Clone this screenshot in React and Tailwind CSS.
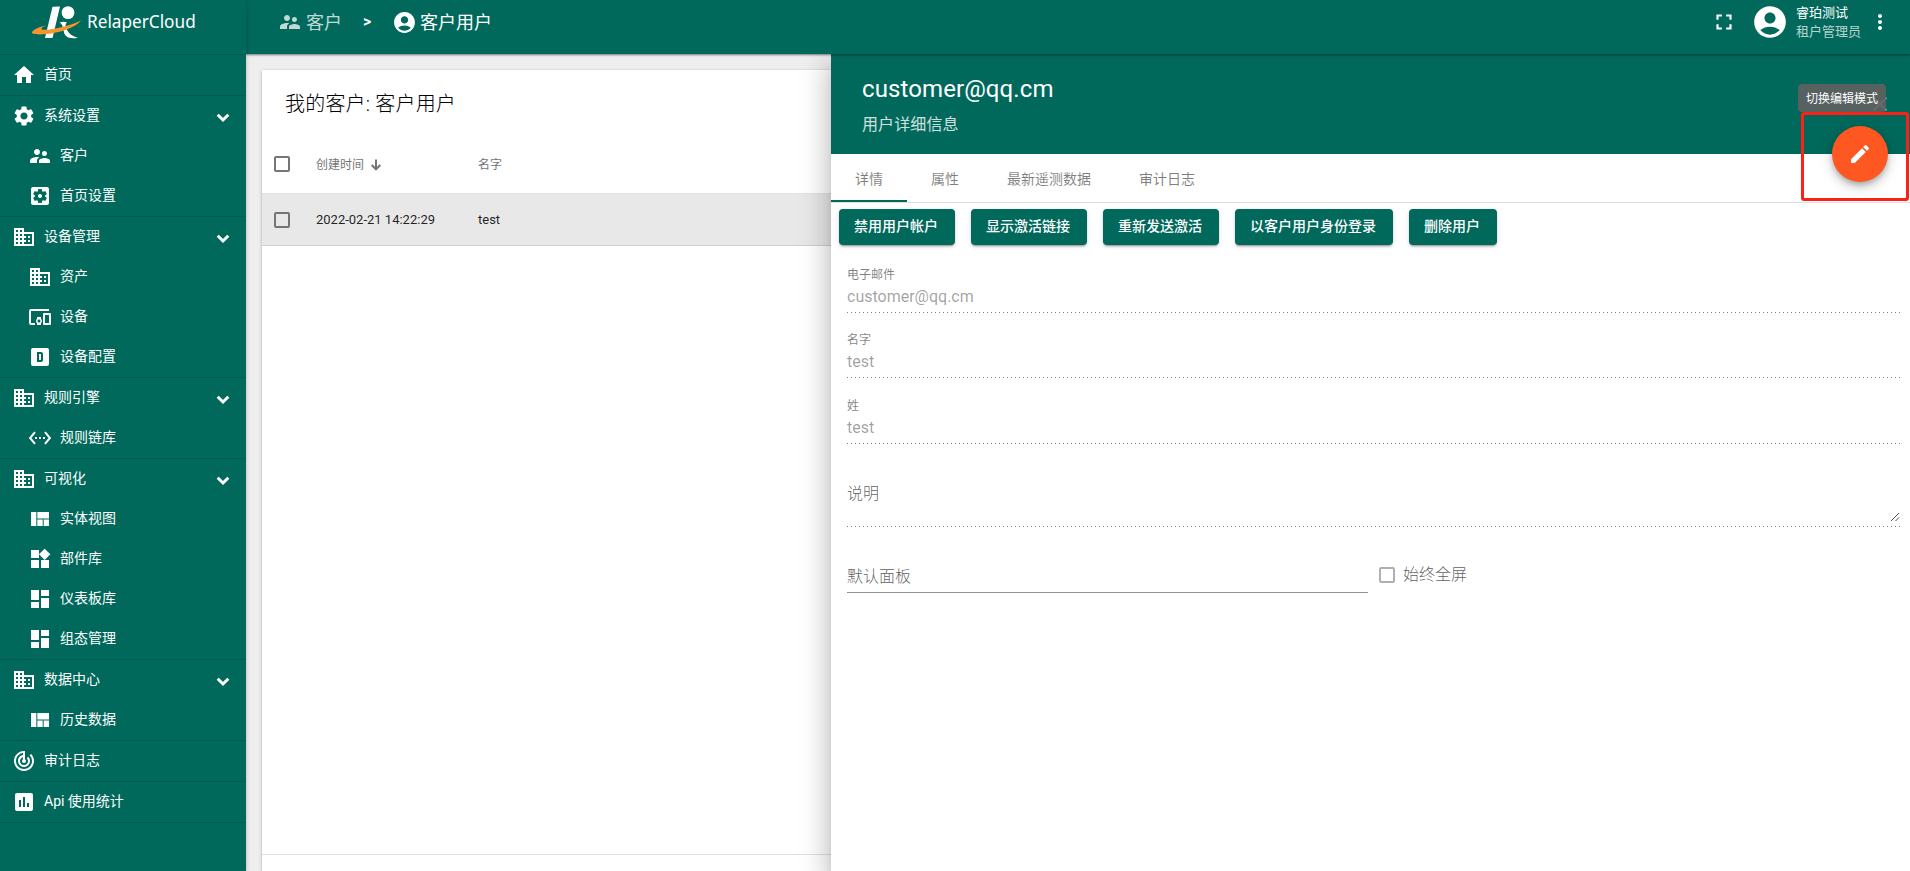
import { useState } from "react";
import {
  MdAccountCircle,
  MdClose,
  MdDashboard,
  MdDevicesOther,
  MdDomain,
  MdEdit,
  MdFullscreen,
  MdHome,
  MdInsertChart,
  MdMoreVert,
  MdSettings,
  MdSettingsApplications,
  MdSettingsEthernet,
  MdSupervisorAccount,
  MdTrackChanges,
  MdViewQuilt,
  MdWidgets,
} from "react-icons/md";

function AlphaDBox({ size = 24, className = "" }) {
  return (
    <svg width={size} height={size} viewBox="0 0 24 24" fill="currentColor" className={className}>
      <path d="M9 7v10h4a2 2 0 0 0 2-2V9a2 2 0 0 0-2-2H9m2 2h2v6h-2V9M5 3h14a2 2 0 0 1 2 2v14a2 2 0 0 1-2 2H5a2 2 0 0 1-2-2V5a2 2 0 0 1 2-2z" fillRule="evenodd" />
    </svg>
  );
}

const MENU = [
  { label: "首页", icon: MdHome },
  {
    label: "系统设置",
    icon: MdSettings,
    children: [
      { label: "客户", icon: MdSupervisorAccount },
      { label: "首页设置", icon: MdSettingsApplications },
    ],
  },
  {
    label: "设备管理",
    icon: MdDomain,
    children: [
      { label: "资产", icon: MdDomain },
      { label: "设备", icon: MdDevicesOther },
      { label: "设备配置", icon: AlphaDBox },
    ],
  },
  {
    label: "规则引擎",
    icon: MdDomain,
    children: [{ label: "规则链库", icon: MdSettingsEthernet }],
  },
  {
    label: "可视化",
    icon: MdDomain,
    children: [
      { label: "实体视图", icon: MdViewQuilt },
      { label: "部件库", icon: MdWidgets },
      { label: "仪表板库", icon: MdDashboard },
      { label: "组态管理", icon: MdDashboard },
    ],
  },
  {
    label: "数据中心",
    icon: MdDomain,
    children: [{ label: "历史数据", icon: MdViewQuilt }],
  },
  { label: "审计日志", icon: MdTrackChanges },
  { label: "Api 使用统计", icon: MdInsertChart },
];

const TABS = ["详情", "属性", "最新遥测数据", "审计日志"];

const ACTIONS = ["禁用用户帐户", "显示激活链接", "重新发送激活", "以客户用户身份登录", "删除用户"];

function Logo() {
  return (
    <svg width="50" height="34" viewBox="0 0 50 34" className="shrink-0">
      <path d="M20.500 1.800 28 1.500 20.500 33H13z" fill="#fff" />
      <circle cx="36" cy="7.600" r="6.400" fill="#fff" />
      <path d="M27.500 17.500c2.500-1 5-1 7.500-.3-1.500 1.500-1.800 3-1 5.300 1.500 4.500 5 8.500 12 10.200-4 .8-8.500.8-11-.9-3.500-2.500-3-6-4-9.300-.7-2.400-1.700-4-3.500-5z" fill="#fff" />
      <path d="M14.500 20.200C5 22.500 0 25.500 0 27.600c0 1.800 6 2.200 14 1.500C29 27.800 44 22 49 15.500c-7 3.500-17 6.500-28 8.500-7 1.200-11.500 1.200-11.500-.3 0-1.200 2-2.300 5-3.500z" fill="#f7952d" />
    </svg>
  );
}

function Chevron() {
  return (
    <svg width="14" height="10" viewBox="0 0 14 10" fill="none" className="ml-auto mr-[16px] mt-[3px]">
      <path d="M1.700 1.700 7 7l5.300-5.300" stroke="#fff" strokeWidth="3" />
    </svg>
  );
}

function SortArrow() {
  return (
    <svg width="12" height="12" viewBox="0 0 12 12" fill="none" className="mt-0.5 mr-auto ml-1.5">
      <path d="M6 .5v10M1.700 6 6 10.300 10.300 6" stroke="#757575" strokeWidth="2" />
    </svg>
  );
}

function Sidebar() {
  return (
    <nav className="z-20 flex w-[246px] shrink-0 flex-col bg-[#00695c] text-white shadow-[0_1px_4px_rgba(0,0,0,0.25)]">
      <div className="flex h-[54px] items-start pl-8 pt-[5px]">
        <Logo />
        <span className="ml-[5px] mt-[5px] font-['Noto_Sans'] text-[17.2px] leading-6">
          RelaperCloud
        </span>
      </div>
      <ul className="border-b border-[#005a4e] text-sm">
        {MENU.map(({ label, icon: Icon, children }) => (
          <li key={label} className="border-t border-[#005a4e]">
            <div className="flex h-10 items-center pl-3">
              <Icon size={24} />
              <span className="-mt-[3px] ml-2">{label}</span>
              {children && <Chevron />}
            </div>
            {children?.map(({ label: sub, icon: SubIcon }) => (
              <div key={sub} className="flex h-10 items-center pl-7">
                <SubIcon size={24} />
                <span className="-mt-[3px] ml-2">{sub}</span>
              </div>
            ))}
          </li>
        ))}
      </ul>
    </nav>
  );
}

function TopBar() {
  return (
    <header className="relative z-10 flex h-[54px] shrink-0 items-start bg-[#00695c] pl-8 text-white shadow-[0_1px_2px_rgba(0,0,0,0.5)]">
      <div className="flex h-11 items-center text-lg">
        <MdSupervisorAccount size={24} className="opacity-75" />
        <span className="ml-1 mt-px opacity-75">客户</span>
        <span className="ml-[21px] w-[29px] text-base font-bold">&gt;</span>
        <MdAccountCircle size={25} />
        <span className="ml-[3px] mt-px">客户用户</span>
      </div>
      <div className="ml-auto flex h-11 items-center">
        <MdFullscreen size={26} />
        <MdAccountCircle size={38} className="ml-[14px]" />
        <div className="ml-[7px] flex w-[72px] flex-col text-[13px] leading-[19px]">
          <span>睿珀测试</span>
          <span className="opacity-70">租户管理员</span>
        </div>
        <MdMoreVert size={24} className="mr-[18px]" />
      </div>
    </header>
  );
}

function Checkbox({ className = "border-[#757575]" }) {
  return <span className={`block size-4 shrink-0 rounded-[2px] border-2 ${className}`} />;
}

function UserTable() {
  return (
    <section className="mt-4 ml-4 flex w-[569px] flex-col bg-white shadow-[0_1px_3px_rgba(0,0,0,0.3)]">
      <h2 className="h-16 pl-[23px] pt-5 text-xl leading-7 font-light tracking-[0.01em] text-black">
        我的客户: 客户用户
      </h2>
      <div className="flex h-[60px] items-center border-b border-[#e0e0e0] pl-3 text-xs text-[#757575]">
        <Checkbox />
        <span className="ml-[26px] mt-0.5">创建时间</span>
        <SortArrow />
        <span className="mt-0.5 w-[353px]">名字</span>
      </div>
      <div className="flex h-[52px] items-center border-b border-[#cfcfcf] bg-[#e8e8e8] pl-3 text-[13px] text-black/87">
        <Checkbox />
        <span className="ml-[26px] mr-auto">2022-02-21 14:22:29</span>
        <span className="w-[353px]">test</span>
      </div>
      <div className="mt-auto h-[17px] border-t border-[#e0e0e0]" />
    </section>
  );
}

function DottedLine() {
  return (
    <div className="h-px bg-[linear-gradient(to_right,rgba(0,0,0,0.5)_0,rgba(0,0,0,0.5)_33%,transparent_0)] bg-[length:4px_1px] bg-repeat-x" />
  );
}

function Field({ label, value }) {
  return (
    <div className="flex h-[66px] flex-col justify-end">
      <span className="text-xs leading-5 text-black/50">{label}</span>
      <span className="mb-1 text-base leading-[23px] text-black/38">{value}</span>
      <DottedLine />
    </div>
  );
}

function DetailsForm() {
  return (
    <div className="flex flex-col pl-4 pr-2.5 pt-[2px]">
      <Field label="电子邮件" value="customer@qq.cm" />
      <div className="-mt-px">
        <Field label="名字" value="test" />
      </div>
      <Field label="姓" value="test" />
      <div className="flex h-[82px] items-end">
        <span className="mb-5 text-base leading-6 font-light text-black/65">说明</span>
        <svg width="10" height="10" viewBox="0 0 10 10" className="mb-1 ml-auto" stroke="#555" strokeWidth="1">
          <path d="M1 9l8-8M5.500 9 9 5.500" />
        </svg>
      </div>
      <DottedLine />
      <div className="mt-[33px] flex items-start">
        <div className="flex h-[33px] w-[521px] items-start border-b border-[#949494]">
          <span className="mt-[5px] text-base leading-6 font-light text-black/65">默认面板</span>
        </div>
        <div className="ml-[11px] mt-[3px] flex items-center text-base leading-6 font-light text-black/65">
          <Checkbox className="border-[#b0b0b0]" />
          <span className="ml-2">始终全屏</span>
        </div>
      </div>
    </div>
  );
}

function DetailsPanel() {
  const [active, setActive] = useState(TABS[0]);

  return (
    <aside className="absolute inset-y-0 right-0 flex w-[1079px] flex-col bg-white shadow-[0_8px_10px_-5px_rgba(0,0,0,0.2),0_16px_24px_2px_rgba(0,0,0,0.14),0_6px_30px_5px_rgba(0,0,0,0.12)]">
      <div className="flex h-[100px] shrink-0 flex-col bg-[#00695c] pl-[31px] pt-[19px] text-white">
        <h1 className="text-2xl leading-8 tracking-[0.1px]">customer@qq.cm</h1>
        <p className="mt-2 text-base leading-6 tracking-[0.1px] opacity-80">用户详细信息</p>
        <MdClose size={24} className="absolute right-[18px] top-[38px] opacity-60" />
      </div>

      <div className="flex h-[49px] shrink-0 border-b border-[#dedede]">
        {TABS.map((tab) => (
          <button
            key={tab}
            onClick={() => setActive(tab)}
            className={`h-12 border-b-2 px-6 pt-[3px] text-sm text-black/50 ${
              active === tab ? "border-[#00695c]" : "border-transparent"
            }`}
          >
            {tab}
          </button>
        ))}
      </div>

      <div className="flex gap-4 pl-2 pt-1.5">
        {ACTIONS.map((action) => (
          <button
            key={action}
            className="h-9 rounded bg-[#00695c] pr-[17px] pb-[3px] pl-[15px] text-sm font-medium text-white shadow-[0_3px_1px_-2px_rgba(0,0,0,0.2),0_2px_2px_rgba(0,0,0,0.14),0_1px_5px_rgba(0,0,0,0.12)]"
          >
            {action}
          </button>
        ))}
      </div>

      <DetailsForm />

      {/* edit toggle with its tooltip and highlight frame */}
      <button className="absolute right-[22px] top-[72px] flex size-14 items-center justify-center rounded-full bg-[#ff5722] text-white shadow-[0_3px_5px_-1px_rgba(0,0,0,0.2),0_6px_10px_rgba(0,0,0,0.14),0_1px_18px_rgba(0,0,0,0.12)]">
        <MdEdit size={24} />
      </button>
      <div className="absolute right-6 top-[30px] flex h-7 w-[88px] items-center justify-center rounded bg-[#616161]/90 pt-0.5 text-xs whitespace-nowrap text-white">
        切换编辑模式
      </div>
      <div className="absolute right-px top-[58px] h-[89px] w-[108px] rounded-[3px] border-3 border-[#ff2015]" />
    </aside>
  );
}

export default function App() {
  return (
    <div className="flex h-screen overflow-hidden bg-[#eee] font-[Roboto,'Noto_Sans_CJK_SC',sans-serif]">
      <Sidebar />
      <div className="flex min-w-0 flex-1 flex-col">
        <TopBar />
        <main className="relative flex flex-1 overflow-hidden">
          <UserTable />
          <DetailsPanel />
        </main>
      </div>
    </div>
  );
}
